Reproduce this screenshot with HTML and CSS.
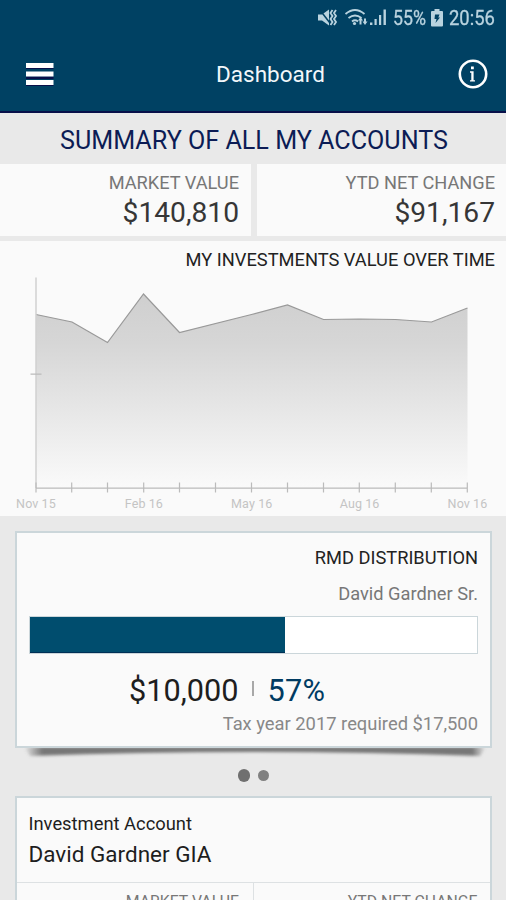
FILE: index.html
```
<!DOCTYPE html>
<html lang="en">
<head>
<meta charset="utf-8">
<title>Dashboard</title>
<link rel="stylesheet" href="styles.css">
</head>
<body>
<div class="screen">
  <header class="header">
    <div class="status">
      <svg class="status-icons" width="72" height="20" viewBox="0 0 72 20">
        <path d="M1 6.500h4l7-5v16l-7-5H1z"/>
        <path class="slash" d="M2.500 1.500l12 15.500"/>
        <path class="line" d="M15.500 2l-2 3 2 3-2 3 2 3-2 3M19 2l-2 3 2 3-2 3 2 3-2 3"/>
        <path class="line" d="M28.500 6q9.500-8 19 0M31.500 10q6.500-5 13 0M35 13.500q3-2.500 6 0"/>
        <circle cx="37.500" cy="15.500" r="1.600"/>
        <path d="M43.500 9l2.500 3.500h-1.500v4h-2v-4H41zM48 17l-2.500-3.500H47v-3h2v3h1.500z"/>
        <path d="M53 14.500h2.400V17H53zM57.500 11h2.200v6h-2.200zM62 7h2.200v10H62zM66.500 1.500h2.400V17h-2.400z"/>
      </svg>
      <span class="status-text percent">55%</span>
      <svg class="battery" width="12" height="18" viewBox="0 0 12 18">
        <path d="M3.500 0h5v2H11a1 1 0 0 1 1 1v13.500a1 1 0 0 1-1 1H1a1 1 0 0 1-1-1V3a1 1 0 0 1 1-1h2.500z"/>
        <path class="bolt" d="M4 5.500h4.500L7.300 8.500H9l-4.500 5.500 1-4H3.500z"/>
      </svg>
      <span class="status-text time">20:56</span>
    </div>
    <div class="appbar">
      <svg class="menu" width="28" height="26" viewBox="0 0 28 26">
        <path class="menu-shade" d="M0 7h27.500v1H0zM0 15.500h27.500v2.500H0zM0 24h27.500v1H0z"/>
        <path d="M0 2h27.500v5H0zM0 10.500h27.500v5H0zM0 19h27.500v5H0z"/>
      </svg>
      <h1>Dashboard</h1>
      <svg class="info" width="30" height="30" viewBox="0 0 30 30">
        <circle cx="15" cy="15" r="13.200"/>
        <path d="M13 7.500h2.800v2.800H13zM12 12.300h3.600v8.900h1.400v1.400h-5v-1.400h1.300v-7.400H12z"/>
      </svg>
    </div>
  </header>

  <h2 class="summary-title">SUMMARY OF ALL MY ACCOUNTS</h2>
  <section class="stats">
    <div class="stat first"><div class="label">MARKET VALUE</div><div class="value">$140,810</div></div>
    <div class="stat"><div class="label">YTD NET CHANGE</div><div class="value">$91,167</div></div>
  </section>

  <section class="chart">
    <h3>MY INVESTMENTS VALUE OVER TIME</h3>
    <svg class="plot" width="506" height="220" viewBox="0 275 506 220">
      <defs>
        <linearGradient id="area" gradientUnits="userSpaceOnUse" x1="0" y1="294" x2="0" y2="488">
          <stop offset="0" stop-color="#cfcfcf"/>
          <stop offset="0.250" stop-color="#d6d6d6"/>
          <stop offset="1" stop-color="#fafafa"/>
        </linearGradient>
      </defs>
      <path fill="url(#area)" d="M36 314.500L72 322l35.500 20.500L143.500 294l36 38.500 72-18L287.500 305l36 14.500 36-.5 36 .5 36 2.500 36-14V488H36z"/>
      <path class="trend" d="M36 314.500L72 322l35.500 20.500L143.500 294l36 38.500 72-18L287.500 305l36 14.500 36-.5 36 .5 36 2.500 36-14"/>
      <path class="yaxis" d="M36 277.500V488"/>
      <path class="axis" d="M30.500 374.200h11M35.500 488.200h432M36 482.500v10M71.700 482.500v10M107.500 482.500v10M143.700 482.500v10M179.500 482.500v10M215.500 482.500v10M251.500 482.500v10M287.500 482.500v10M323.500 482.500v10M359.300 482.500v10M395.300 482.500v10M431.300 482.500v10M467.300 482.500v10"/>
    </svg>
    <div class="months"><span>Nov 15</span><span>Feb 16</span><span>May 16</span><span>Aug 16</span><span>Nov 16</span></div>
  </section>

  <section class="card rmd">
    <h3 class="rmd-title">RMD DISTRIBUTION</h3>
    <p class="owner">David Gardner Sr.</p>
    <div class="bar"><div class="fill" style="width:57.100%"></div></div>
    <div class="amount"><span class="sum">$10,000</span><i></i><span class="pct">57%</span></div>
    <p class="required">Tax year 2017 required $17,500</p>
    <svg class="shadow" width="470" height="16" viewBox="0 0 470 16">
      <defs>
        <linearGradient id="fade" x1="0" y1="0" x2="1" y2="0">
          <stop offset="0" stop-color="#777" stop-opacity="0"/>
          <stop offset="0.040" stop-color="#777"/>
          <stop offset="0.970" stop-color="#777"/>
          <stop offset="1" stop-color="#777" stop-opacity="0"/>
        </linearGradient>
        <filter id="soft" x="-5%" y="-60%" width="110%" height="220%"><feGaussianBlur stdDeviation="1.500"/></filter>
      </defs>
      <path fill="url(#fade)" filter="url(#soft)" d="M4 -1L466 -1L460 8Q235 0 10 8z"/>
    </svg>
  </section>
  <div class="dots"><b></b><b></b></div>

  <section class="card account">
    <p class="kind">Investment Account</p>
    <p class="name">David Gardner GIA</p>
    <div class="split"><span>MARKET VALUE</span><span>YTD NET CHANGE</span></div>
  </section>
</div>
</body>
</html>
```
FILE: styles.css
```
* { box-sizing: border-box; }
body { margin: 0; font-family: Roboto, sans-serif; background: #e9e9e9; }
h1, h2, h3, p { margin: 0; font-weight: 400; }
svg { display: block; flex: none; }
.screen { width: 506px; height: 900px; overflow: hidden; background: #e9e9e9; }

.header { height: 113px; background: #004163; border-bottom: 2px solid #08104a; }
.status { height: 36px; display: flex; justify-content: flex-end; align-items: center; padding-right: 11px; fill: #b9d3df; }
.status-icons { margin-right: 4px; }
.status-icons .line { fill: none; stroke: #b9d3df; stroke-width: 1.800; }
.status-icons .slash { stroke: #004163; stroke-width: 1.500; }
.status-text { font-size: 20px; line-height: 36px; color: #b9d3df; white-space: nowrap; transform-origin: left; -webkit-text-stroke: .3px #b9d3df; }
.percent { width: 33px; transform: scaleX(.89); }
.battery { margin: 0 6px 0 5px; }
.bolt { fill: #004163; }
.time { width: 46px; transform: scaleX(.92); }
.appbar { height: 75px; display: flex; align-items: center; justify-content: space-between; padding: 0 18px 0 26px; }
.appbar h1 { margin-left: 29px; font-size: 22.500px; line-height: 76px; color: #f2f7fa; }
.menu { fill: #fff; }
.menu-shade { fill: #08104a; }
.info { fill: #fff; }
.info circle { fill: none; stroke: #fff; stroke-width: 2.600; }

.summary-title { height: 51px; line-height: 55px; text-align: center; font-size: 25.150px; color: #0c1c55; padding-left: 2px; }
.stats { display: grid; grid-template-columns: 251px 249px; column-gap: 6px; }
.stat { height: 72px; padding: 5px 11px 0 0; text-align: right; background: #fafafa; }
.stat.first { padding-right: 12px; }
.label { font-size: 18.200px; line-height: 28px; color: #777; }
.value { font-size: 28.200px; line-height: 31px; color: #363636; }

.chart { height: 275px; margin-top: 5px; background: #fafafa; }
.chart h3 { height: 34px; line-height: 38px; padding-right: 11px; text-align: right; font-size: 18.300px; color: #222; }
.trend { fill: none; stroke: #999; stroke-width: 1.200; }
.yaxis { stroke: #d0d0d0; stroke-width: 1.500; }
.axis { fill: none; stroke: #bbb; stroke-width: 1.200; }
.months { display: flex; justify-content: space-between; padding: 0 7.500px 0 5px; }
.months span { width: 62px; text-align: center; white-space: nowrap; font-size: 12.500px; line-height: 18px; letter-spacing: .1px; color: #c4c4c4; }

.card { width: 477px; margin-left: 15px; background: #fafafa; border: 2px solid #cbd6da; position: relative; }
.rmd { height: 217px; margin-top: 15px; padding: 8px 12px 0; text-align: right; }
.rmd-title { font-size: 18.250px; line-height: 34px; color: #222; }
.owner { font-size: 18.250px; line-height: 38px; color: #777; }
.bar { height: 38px; margin-top: 3px; background: #fff; border: 1.500px solid #cbd6da; }
.fill { height: 100%; background: #004d6e; border-bottom: 1px solid #003056; }
.amount { display: flex; align-items: center; height: 54px; margin-top: 9px; padding-left: 100px; font-size: 30.700px; color: #1e1e1e; }
.amount i { width: 2px; height: 15px; margin: -3px 14px 0 13px; background: #a8a8a8; }
.pct { color: #003b62; letter-spacing: .3px; }
.required { font-size: 18.350px; line-height: 20px; margin-top: -3px; color: #888; }
.shadow { position: absolute; left: 3px; top: 215px; }

.dots { height: 48px; padding: 7px 0 0 1px; display: flex; justify-content: center; align-items: center; gap: 8px; }
.dots b { width: 11px; height: 11px; border-radius: 50%; background: #808080; }
.dots b:first-child { width: 12.500px; height: 12.500px; background: #707070; }

.account { height: 120px; padding: 11px 0 0; color: #1e1e1e; }
.kind { padding-left: 11.500px; font-size: 18.350px; line-height: 30px; }
.name { padding-left: 11.500px; font-size: 22.500px; line-height: 30px; }
.split { display: grid; grid-template-columns: 237px 236px; margin-top: 13px; border-top: 1.500px solid #dde1e3; }
.split span { height: 36px; line-height: 38px; text-align: right; font-size: 15.800px; color: #777; padding-right: 12.500px; }
.split span:first-child { border-right: 1.500px solid #dde1e3; padding-right: 14px; }
```
